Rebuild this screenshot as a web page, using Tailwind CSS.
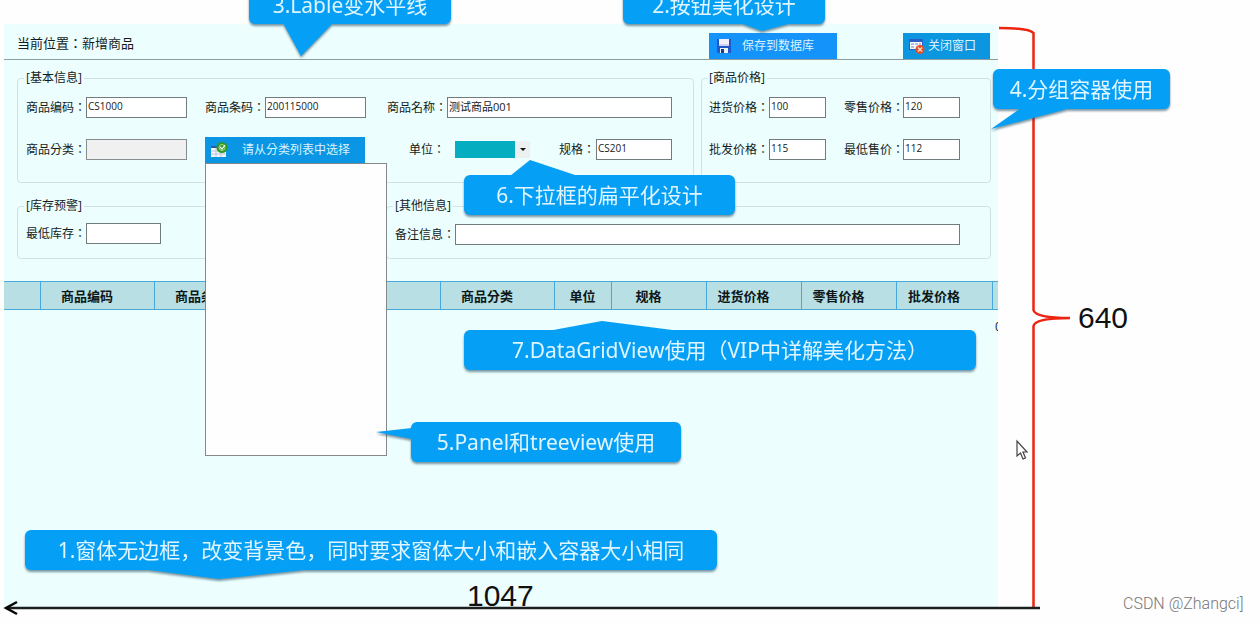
<!DOCTYPE html>
<html>
<head>
<meta charset="utf-8">
<meta name="viewport" content="width=device-width, initial-scale=1">
<title>新增商品</title>
<script src="https://cdn.jsdelivr.net/npm/@tailwindcss/browser@4"></script>
</head>
<body class="relative min-h-screen overflow-hidden bg-[#fefefe] pt-6 pr-[262px] pl-1 font-['Open_Sans','Noto_Sans_CJK_TC','Noto_Sans_CJK_SC',sans-serif] text-xs leading-4 text-[#151b1b]">

<main class="relative flex min-h-[585px] flex-col bg-[#ecfefe]">
  <header class="flex h-9 items-center border-b border-[#8f9d9f] pr-2 pl-[13px]">
    <h1 class="mr-auto pt-0.5 text-[13px] leading-5">当前位置：新增商品</h1>
    <button type="button" class="mt-2 mr-[66px] flex h-[26px] w-32 items-center gap-2.5 bg-[#1493fb] pl-[7px] text-[#d9f3ff]">
      <svg class="size-4" viewBox="0 0 16 16" aria-hidden="true">
        <path d="M1 1h14v14H2l-1-1z" fill="#1f58c8"/>
        <path d="M3 1h10v7H3z" fill="#f1effb"/><path d="M3 6h10v2H3z" fill="#d6d0f0"/>
        <path d="M4 10h8v5H4z" fill="#eef2fb"/><path d="M5 11h3v4H5z" fill="#1b3c86"/>
      </svg>
      <span>保存到数据库</span>
    </button>
    <button type="button" class="mt-2 flex h-[26px] w-[87px] items-center gap-[3px] bg-[#0c96df] pl-1.5 text-[#d9f3ff]">
      <svg class="size-4" viewBox="0 0 16 16" aria-hidden="true">
        <path d="M0 1h14v11H0z" fill="#2a5fc6"/><path d="M1 4h12v7H1z" fill="#f4f6fb"/>
        <path d="M2 5h3v2H2zM6 5h3v2H6zM10 5h2v2h-2zM2 8h3v2H2z" fill="#b7bfe0"/>
        <circle cx="11" cy="11.500" r="4.500" fill="#e2502a"/>
        <path d="M9 9.500l4 4m0-4l-4 4" stroke="#ffd9b8" stroke-width="1.500"/>
      </svg>
      <span>关闭窗口</span>
    </button>
  </header>

  <form class="flex flex-col gap-[15px] pt-2.5 pr-[7px] pl-[13px]">
    <div class="flex gap-[7px]">
      <fieldset class="min-w-0 flex-1 rounded-sm border border-[#cfe3e4] pr-[21px] pb-[22px] pl-1.5">
        <legend class="px-0.5">[基本信息]</legend>
        <div class="flex flex-col gap-[21px] pt-[11px] pl-0.5">
          <div class="flex h-[21px] items-center">
            <label for="code" class="w-[60px]">商品编码：</label>
            <input id="code" value="CS1000" class="mr-[18px] h-[21px] w-[101px] border border-[#727b7d] bg-white px-px pb-1 text-[10px]">
            <label for="barcode" class="w-[60px]">商品条码：</label>
            <input id="barcode" value="200115000" class="mr-[21px] h-[21px] w-[101px] border border-[#727b7d] bg-white px-px pb-1 text-[10px]">
            <label for="name" class="w-[60px]">商品名称：</label>
            <input id="name" value="测试商品001" class="h-[21px] min-w-0 flex-1 border border-[#727b7d] bg-white px-px pb-1 text-[11px]">
          </div>
          <div class="flex h-[21px] items-center">
            <label for="category" class="w-[60px]">商品分类：</label>
            <input id="category" readonly class="mr-[18px] h-[21px] w-[101px] border border-[#858d90] bg-[#f0f0f1]">
            <div class="relative mr-11">
              <button type="button" aria-expanded="true" class="flex h-[26px] w-40 items-center gap-3.5 bg-[#0a96e4] pl-1.5 text-[#d9f3ff]">
                <svg class="h-4 w-[17px]" viewBox="0 0 17 16" aria-hidden="true">
                  <path d="M0 4h6v3H0z" fill="#2458bd"/><path d="M0 6h15v9H0z" fill="#f5f6fb"/>
                  <path d="M0 9h15M0 12h15M5 6v9M10 6v9" stroke="#bcc3dc"/>
                  <circle cx="11" cy="5.500" r="5.500" fill="#2e9a25"/>
                  <circle cx="11" cy="5.500" r="3" fill="none" stroke="#a5dc83"/>
                  <path d="M9 5l2 2 3-4" fill="none" stroke="#fff" stroke-width="1.200"/>
                </svg>
                <span>请从分类列表中选择</span>
              </button>
              <div role="tree" aria-label="商品分类" class="absolute top-[26px] left-0 z-10 h-[293px] w-[182px] border border-[#85898c] bg-[#fefefe]"></div>
            </div>
            <label for="unit" class="mr-2.5 w-9">单位：</label>
            <div class="relative">
              <select id="unit" class="block h-[17px] w-[75px] appearance-none bg-[#04adbf]"><option></option></select>
              <svg class="pointer-events-none absolute top-0 right-0 h-[17px] w-[15px] bg-[#edf0f0]" viewBox="0 0 15 17" aria-hidden="true"><path d="M5 7h6l-3 3z" fill="#111"/></svg>
            </div>
            <label for="spec" class="mr-px ml-auto w-9">规格：</label>
            <input id="spec" value="CS201" class="h-[21px] w-[76px] border border-[#727b7d] bg-white px-px pb-1 text-[10px]">
          </div>
        </div>
      </fieldset>

      <fieldset class="w-[290px] rounded-sm border border-[#cfe3e4] pb-[22px] pl-[5px]">
        <legend class="px-0.5">[商品价格]</legend>
        <div class="grid grid-cols-[60px_57px_60px_57px] items-center gap-y-[21px] pt-[11px] pl-0.5">
          <label for="buy">进货价格：</label>
          <input id="buy" value="100" class="h-[21px] w-[57px] border border-[#727b7d] bg-white px-px pb-1 text-[10px]">
          <label for="retail" class="ml-[18px] whitespace-nowrap">零售价格：</label>
          <input id="retail" value="120" class="ml-[17px] h-[21px] w-[57px] border border-[#727b7d] bg-white px-px pb-1 text-[10px]">
          <label for="whole">批发价格：</label>
          <input id="whole" value="115" class="h-[21px] w-[57px] border border-[#727b7d] bg-white px-px pb-1 text-[10px]">
          <label for="lowest" class="ml-[18px] whitespace-nowrap">最低售价：</label>
          <input id="lowest" value="112" class="ml-[17px] h-[21px] w-[57px] border border-[#727b7d] bg-white px-px pb-1 text-[10px]">
        </div>
      </fieldset>
    </div>

    <div class="flex gap-1.5">
      <fieldset class="w-[363px] rounded-sm border border-[#cfe3e4] pb-3.5 pl-1.5">
        <legend class="px-0.5">[库存预警]</legend>
        <div class="flex items-center pt-[9px] pl-0.5">
          <label for="stock" class="w-[60px]">最低库存：</label>
          <input id="stock" class="h-[21px] w-[75px] border border-[#727b7d] bg-white px-px">
        </div>
      </fieldset>
      <fieldset class="min-w-0 flex-1 rounded-sm border border-[#cfe3e4] pr-[30px] pl-1.5">
        <legend class="px-0.5">[其他信息]</legend>
        <div class="flex items-center pt-[10px] pl-0.5">
          <label for="remark" class="w-[60px]">备注信息：</label>
          <input id="remark" class="h-[21px] min-w-0 flex-1 border border-[#727b7d] bg-white px-px">
        </div>
      </fieldset>
    </div>
  </form>

  <table class="mt-[22px] w-full table-fixed border-collapse text-[13px] text-[#0d1719]">
    <thead>
      <tr class="h-7 border-y border-[#4aa9d6] bg-[#b8dfe3]">
        <th class="w-9 border-r border-[#45a9dd]"></th>
        <th class="w-[114px] border-r border-[#45a9dd] pr-5">商品编码</th>
        <th class="w-[114px] border-r border-[#45a9dd] pr-5">商品条码</th>
        <th class="border-r border-[#45a9dd] pr-5">商品名称</th>
        <th class="w-[114px] border-r border-[#45a9dd] pr-5">商品分类</th>
        <th class="w-[57px] border-r border-[#45a9dd]">单位</th>
        <th class="w-[95px] border-r border-[#45a9dd] pr-5">规格</th>
        <th class="w-[95px] border-r border-[#45a9dd] pr-5">进货价格</th>
        <th class="w-[95px] border-r border-[#45a9dd] pr-5">零售价格</th>
        <th class="w-[96px] border-r border-[#45a9dd] pr-5">批发价格</th>
        <th class="w-1.5"></th>
      </tr>
    </thead>
  </table>
  <span class="mt-[9px] w-[3px] self-end overflow-hidden text-xs">0</span>
</main>

<!-- Dimension marks: width arrow and height brace -->
<svg class="pointer-events-none absolute top-0 left-0 z-20" width="1260" height="623" viewBox="0 0 1260 623" fill="none" aria-hidden="true">
  <path d="M999 28c18 0 31 1 34.500 5V310c1 5 12 8 36.500 8c-24.500 0-35.500 3-36.500 8V608" stroke="#ed2410" stroke-width="2.500"/>
  <path d="M6 608H1040" stroke="#1b1f20" stroke-width="2.500"/>
  <path d="M17 602L6 608l11 6" stroke="#050505" stroke-width="2.500"/>
  <path d="M1017 441v15l3.500-3 2.500 6 2.500-1-2.500-6h4z" fill="#fff" stroke="#444" stroke-width="1.200"/>
</svg>
<p class="absolute top-[578px] left-[467px] z-20 font-['Liberation_Sans',sans-serif] text-[30px] leading-9 text-[#111]">1047</p>
<p class="absolute top-[300px] left-[1078px] z-20 font-['Liberation_Sans',sans-serif] text-[30px] leading-9 text-[#111]">640</p>
<p class="absolute top-[594px] left-[1123px] z-20 font-['Roboto',sans-serif] text-base leading-5 font-light text-[#777]">CSDN @Zhangci]</p>

<!-- Callouts -->
<aside lang="zh-CN" class="font-['Noto_Sans','Noto_Sans_CJK_SC',sans-serif] text-[21px] leading-6 text-[#dff5ff]">
  <div class="absolute -top-4 left-[249px] z-30 flex h-10 w-[202px] items-center justify-center rounded-md bg-[#059ff5] pt-0.5 drop-shadow-[0_2px_1px_rgba(40,80,100,0.6)]">
    <svg class="absolute top-[39px] left-[34px]" width="50" height="33" viewBox="0 0 50 33" aria-hidden="true"><path d="M0 0h50L18 33z" fill="#059ff5"/></svg>
    <p class="relative">3.Lable变水平线</p>
  </div>
  <div class="absolute -top-4 left-[623px] z-30 flex h-10 w-[202px] items-center justify-center rounded-md bg-[#059ff5] pt-0.5 drop-shadow-[0_2px_1px_rgba(40,80,100,0.6)]">
    <svg class="absolute top-[39px] left-[117px]" width="52" height="8" viewBox="0 0 52 8" aria-hidden="true"><path d="M0 0h52L22 8z" fill="#059ff5"/></svg>
    <p class="relative">2.按钮美化设计</p>
  </div>
  <div class="absolute top-[69px] left-[993px] z-30 flex h-10 w-[177px] items-center justify-center rounded-md bg-[#059ff5] drop-shadow-[0_2px_1px_rgba(40,80,100,0.6)]">
    <svg class="absolute top-[39px] -left-0.5" width="80" height="21" viewBox="0 0 80 21" aria-hidden="true"><path d="M30 0h50L0 21z" fill="#059ff5"/></svg>
    <p class="relative">4.分组容器使用</p>
  </div>
  <div class="absolute top-[175px] left-[464px] z-30 flex h-10 w-[271px] items-center justify-center rounded-md bg-[#059ff5] drop-shadow-[0_2px_1px_rgba(40,80,100,0.6)]">
    <svg class="absolute -top-[15px] left-[46px]" width="68" height="16" viewBox="0 0 68 16" aria-hidden="true"><path d="M0 16h68L20 0z" fill="#059ff5"/></svg>
    <p class="relative">6.下拉框的扁平化设计</p>
  </div>
  <div class="absolute top-[330px] left-[464px] z-30 flex h-10 w-[512px] items-center justify-center rounded-md bg-[#059ff5] drop-shadow-[0_2px_1px_rgba(40,80,100,0.6)]">
    <svg class="absolute -top-[9px] left-[84px]" width="132" height="10" viewBox="0 0 132 10" aria-hidden="true"><path d="M0 10h132L54 0z" fill="#059ff5"/></svg>
    <p class="relative">7.DataGridView使用（VIP中详解美化方法）</p>
  </div>
  <div class="absolute top-[422px] left-[411px] z-30 flex h-10 w-[270px] items-center justify-center rounded-md bg-[#059ff5] drop-shadow-[0_2px_1px_rgba(40,80,100,0.6)]">
    <svg class="absolute top-1.5 -left-[35px]" width="36" height="12" viewBox="0 0 36 12" aria-hidden="true"><path d="M36 0v11L0 4z" fill="#059ff5"/></svg>
    <p class="relative">5.Panel和treeview使用</p>
  </div>
  <div class="absolute top-[530px] left-[25px] z-30 flex h-10 w-[692px] items-center justify-center rounded-md bg-[#059ff5] drop-shadow-[0_2px_1px_rgba(40,80,100,0.6)]">
    <svg class="absolute top-[39px] left-[116px]" width="172" height="10" viewBox="0 0 172 10" aria-hidden="true"><path d="M0 0h172L78 10z" fill="#059ff5"/></svg>
    <p class="relative">1.窗体无边框，改变背景色，同时要求窗体大小和嵌入容器大小相同</p>
  </div>
</aside>
</body>
</html>
